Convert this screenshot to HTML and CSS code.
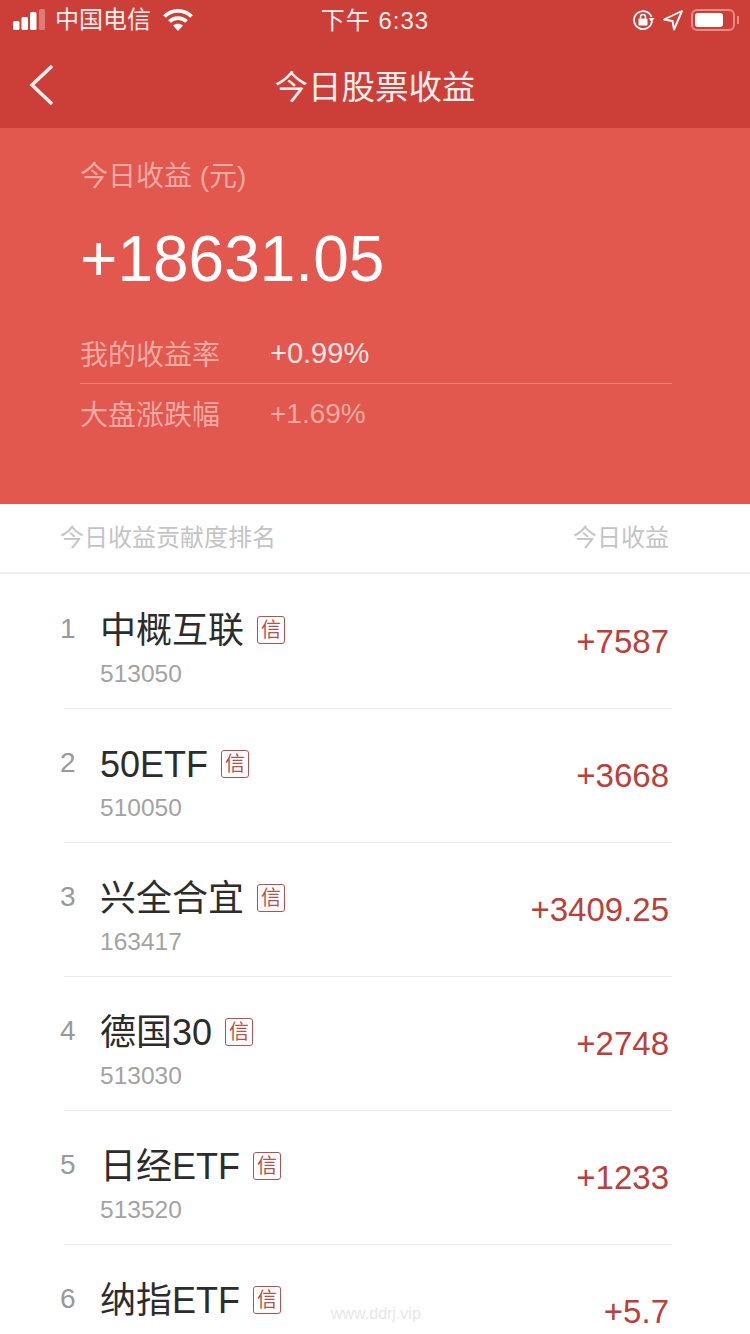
FILE: index.html
```html
<!DOCTYPE html>
<html lang="zh-CN">
<head>
<meta charset="utf-8">
<title>今日股票收益</title>
<link rel="stylesheet" href="styles.css">
</head>
<body>
<div class="phone">
  <header class="top">
    <div class="status">
      <div class="st-left">
        <svg class="signal" width="34" height="22" viewBox="0 0 34 22"><rect x="0" y="12" width="6.500" height="9" rx="1.500" fill="#fff"/><rect x="8.500" y="8" width="6.500" height="13" rx="1.500" fill="#fff"/><rect x="17" y="3" width="6.500" height="18" rx="1.500" fill="#fff"/><rect x="26" y="0" width="6" height="21" rx="1.500" fill="#e07a76"/></svg>
        <span class="carrier">中国电信</span>
        <svg class="wifi" width="30" height="23" viewBox="0 0 30 23"><path d="M1.500 8.500C9 1 21 1 28.500 8.500" fill="none" stroke="#fff" stroke-width="3.800"/><path d="M6.500 13.500C11 9 19 9 23.500 13.500" fill="none" stroke="#fff" stroke-width="3.800"/><path d="M10 17.500C13 15 17 15 20 17.500L15 23Z" fill="#fff"/></svg>
      </div>
      <span class="clock">下午 6:33</span>
      <div class="st-right">
        <svg width="24" height="24" viewBox="0 0 24 24"><path d="M20.500 9A9 9 0 1 0 21 13" fill="none" stroke="#fff" stroke-width="1.800"/><path d="M17.500 10h6l-3 4z" fill="#fff"/><rect x="7.500" y="10.500" width="9" height="7" rx="1" fill="#fff"/><path d="M9.500 10.500V9a2.500 2.500 0 0 1 5 0v1.500" fill="none" stroke="#fff" stroke-width="1.500"/></svg>
        <svg width="22" height="22" viewBox="0 0 22 22"><path d="M20 2 2 10.500l8.500 1.500 1.500 8.500z" fill="none" stroke="#fff" stroke-width="1.900" stroke-linejoin="round"/></svg>
        <div class="battery"><div class="level"></div></div>
        <div class="nub"></div>
      </div>
    </div>
    <div class="nav">
      <svg class="back" width="28" height="42" viewBox="0 0 28 42"><path d="M24 2 4 21l20 19" fill="none" stroke="#fbeeed" stroke-width="3.600"/></svg>
      <h1>今日股票收益</h1>
    </div>
  </header>

  <section class="summary">
    <div class="s-label">今日收益 (元)</div>
    <div class="s-amount">+18631.05</div>
    <div class="s-row line"><span class="s-key">我的收益率</span><span class="s-val">+0.99%</span></div>
    <div class="s-row"><span class="s-key">大盘涨跌幅</span><span class="s-val dim">+1.69%</span></div>
  </section>

  <div class="thead"><span>今日收益贡献度排名</span><span>今日收益</span></div>

  <ul class="list">
    <li class="item"><span class="rank">1</span><div class="info"><div class="name">中概互联<i class="tag">信</i></div><div class="code">513050</div></div><span class="gain">+7587</span></li>
    <li class="item"><span class="rank">2</span><div class="info"><div class="name">50ETF<i class="tag">信</i></div><div class="code">510050</div></div><span class="gain">+3668</span></li>
    <li class="item"><span class="rank">3</span><div class="info"><div class="name">兴全合宜<i class="tag">信</i></div><div class="code">163417</div></div><span class="gain">+3409.25</span></li>
    <li class="item"><span class="rank">4</span><div class="info"><div class="name">德国30<i class="tag">信</i></div><div class="code">513030</div></div><span class="gain">+2748</span></li>
    <li class="item"><span class="rank">5</span><div class="info"><div class="name">日经ETF<i class="tag">信</i></div><div class="code">513520</div></div><span class="gain">+1233</span></li>
    <li class="item"><span class="rank">6</span><div class="info"><div class="name">纳指ETF<i class="tag">信</i></div><div class="code"></div></div><span class="gain">+5.7</span></li>
  </ul>
  <div class="mark">www.ddrj.vip</div>
</div>
</body>
</html>
```
FILE: styles.css
```css
* { box-sizing: border-box; margin: 0; padding: 0; }
html, body { width: 750px; height: 1334px; overflow: hidden; background: #fff; }
body { font-family: "Liberation Sans", "Noto Sans CJK SC", sans-serif; }
.phone { position: relative; width: 750px; height: 1334px; overflow: hidden; background: #fff; }

.top { height: 128px; background: #cb3f38; color: #fff; display: flex; flex-direction: column; }
.status { height: 40px; display: flex; align-items: center; justify-content: space-between; padding: 0 11px 0 13px; position: relative; }
.st-left { display: flex; align-items: center; gap: 9px; }
.carrier { font-size: 24px; line-height: 34px; color: #fbeeed; margin-left: -1px; }
.wifi { margin-left: 3px; margin-top: -1px; }
.clock { position: absolute; left: 0; right: 0; top: 4px; text-align: center; font-size: 24px; line-height: 34px; letter-spacing: 1px; color: #fbeeed; pointer-events: none; }
.st-right { display: flex; align-items: center; gap: 7px; position: relative; z-index: 1; }
.battery { width: 44px; height: 22px; border: 2px solid #e88a84; border-radius: 6px; padding: 2px; }
.level { width: 28px; height: 14px; background: #fff; border-radius: 3px; }
.nub { width: 2px; height: 8px; background: #e88a84; margin-left: -5px; }

.nav { flex: 1; display: flex; align-items: center; justify-content: center; position: relative; }
.nav h1 { font-size: 33.500px; font-weight: 400; color: #fbeeed; }
.back { position: absolute; left: 28px; top: 24px; }

.summary { height: 376px; background: #e2574e; padding: 30px 78px 0 80px; }
.s-label { font-size: 28px; line-height: 38px; color: #f3a9a3; }
.s-amount { font-size: 64px; line-height: 74px; color: #fff; margin-top: 26px; }
.s-row { display: flex; align-items: center; height: 60px; }
.s-amount + .s-row { margin-top: 28px; }
.s-row.line { border-bottom: 1px solid #ec7f77; }
.s-key { width: 190px; font-size: 28px; color: #f3a9a3; margin-top: -2px; }
.s-val { font-size: 29px; color: #fde5e2; }
.s-val.dim { font-size: 28px; color: #f3a9a3; }

.thead { height: 70px; display: flex; align-items: center; justify-content: space-between; padding: 0 81px 6px 60px; border-bottom: 2px solid #eeeeee; font-size: 24px; color: #c4c4c4; }

.list { list-style: none; padding-top: 1px; }
.item { height: 134px; margin: 0 78px 0 64px; padding-right: 3px; display: flex; align-items: center; border-bottom: 1px solid #ececec; position: relative; }
.rank { position: absolute; left: -4px; top: 38px; font-size: 28px; color: #999; }
.info { margin-left: 36px; margin-top: 14px; }
.name { font-size: 36px; line-height: 44px; color: #2c2c2c; display: flex; align-items: center; }
.tag { font-style: normal; font-size: 20px; width: 28px; height: 28px; border: 1px solid #b4504e; border-radius: 3px; color: #b4504e; display: flex; align-items: center; justify-content: center; margin-left: 13px; margin-top: -2px; }
.code { font-size: 24.500px; line-height: 30px; height: 30px; color: #a3a3a3; margin-top: 6px; }
.gain { margin-left: auto; font-size: 33px; color: #b9403b; }
.mark { position: absolute; left: 331px; top: 1305px; font-size: 16px; color: #e8e8e8; }
```
